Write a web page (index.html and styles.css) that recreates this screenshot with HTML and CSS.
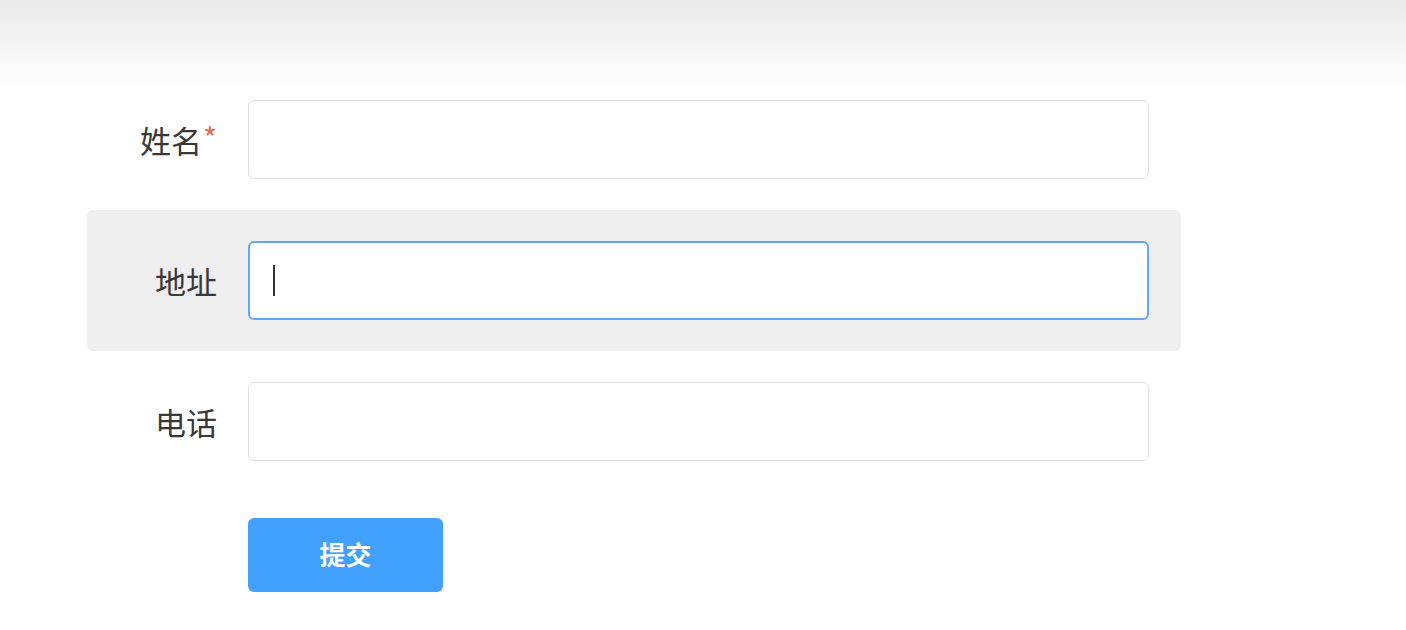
FILE: index.html
```html
<!DOCTYPE html>
<html lang="zh">
<head>
<meta charset="utf-8">
<title>表单</title>
<link rel="stylesheet" href="styles.css">
</head>
<body>
<div class="page">
  <form class="form">
    <div class="row">
      <label class="label">姓名<span class="req">*</span></label>
      <div class="field"><div class="input"></div></div>
    </div>
    <div class="row row-active">
      <label class="label">地址</label>
      <div class="field"><div class="input input-focus"><span class="caret"></span></div></div>
    </div>
    <div class="row">
      <label class="label">电话</label>
      <div class="field"><div class="input"></div></div>
    </div>
    <div class="actions">
      <button type="button" class="btn">提交</button>
    </div>
  </form>
</div>
</body>
</html>
```
FILE: styles.css
```css
html, body {
  margin: 0;
  padding: 0;
}
body {
  width: 1406px;
  height: 630px;
  overflow: hidden;
  background: linear-gradient(to bottom, #eaeaea 0px, #f5f5f5 45px, #ffffff 90px, #ffffff 100%);
  font-family: "Noto Sans CJK SC", "Noto Sans", sans-serif;
  color: #3a3a3a;
}
.page {
  padding: 69px 0 0 87px;
}
.form {
  width: 1094px;
}
.row {
  display: flex;
  align-items: center;
  padding: 31px 32px 31px 0;
  border-radius: 6px;
}
.row-active {
  background: #efefef;
}
.label {
  width: 130px;
  flex: none;
  display: flex;
  justify-content: flex-end;
  align-items: flex-start;
  font-size: 31px;
  line-height: 40px;
  margin-right: 31px;
  color: #383838;
}
.req {
  color: #e0704f;
  font-size: 30px;
  line-height: 30px;
  margin-left: 1px;
  margin-top: 2px;
}
.field {
  flex: 1;
}
.input {
  box-sizing: border-box;
  height: 79px;
  border: 1.5px solid #e0e0e0;
  border-radius: 6px;
  background: #fff;
  display: flex;
  align-items: center;
  padding-left: 23px;
}
.input-focus {
  border: 2px solid #65a6f4;
  padding-left: 22.5px;
}
.caret {
  width: 2px;
  height: 31px;
  background: #333;
}
.actions {
  padding: 26px 0 0 161px;
}
.btn {
  width: 195px;
  height: 74px;
  border: 0;
  border-radius: 6px;
  background: #42a0ff;
  color: #fff;
  font-family: "Noto Sans CJK SC", "Noto Sans", sans-serif;
  font-size: 26px;
  line-height: 30px;
  font-weight: 700;
  padding: 0 0 2px;
  cursor: pointer;
}
```
